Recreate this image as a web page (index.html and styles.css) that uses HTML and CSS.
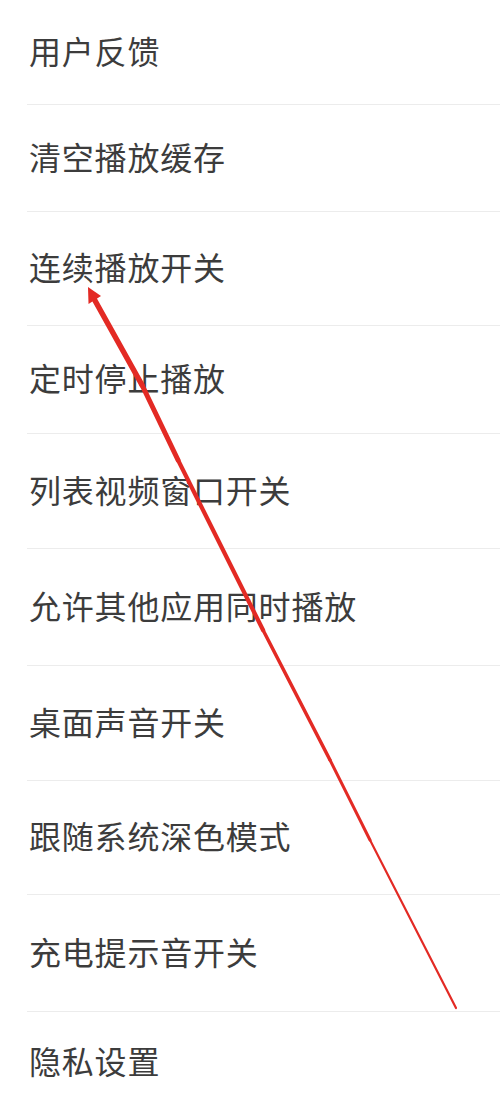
FILE: index.html
```html
<!DOCTYPE html>
<html lang="zh-CN">
<head>
<meta charset="utf-8">
<title>设置</title>
<link rel="stylesheet" href="styles.css">
</head>
<body>
<div class="page">
  <ul class="list">
    <li class="item h105"><span class="label">用户反馈</span></li>
    <li class="item h107"><span class="label">清空播放缓存</span></li>
    <li class="item h114"><span class="label">连续播放开关</span></li>
    <li class="item h108"><span class="label">定时停止播放</span></li>
    <li class="item h115"><span class="label">列表视频窗口开关</span></li>
    <li class="item h117"><span class="label">允许其他应用同时播放</span></li>
    <li class="item h115"><span class="label">桌面声音开关</span></li>
    <li class="item h114"><span class="label">跟随系统深色模式</span></li>
    <li class="item h117"><span class="label">充电提示音开关</span></li>
    <li class="item last h101"><span class="label">隐私设置</span></li>
  </ul>
  <svg class="arrow" width="500" height="1113" viewBox="0 0 500 1113" aria-hidden="true">
    <g fill="none" stroke="#e32a24" stroke-linecap="round">
      <path d="M93 297 L142 385" stroke-width="5.5"/>
      <path d="M142 385 L178 460" stroke-width="5"/>
      <path d="M178 460 L263 630" stroke-width="4.2"/>
      <path d="M263 630 L330 760" stroke-width="3.5"/>
      <path d="M330 760 L370 840" stroke-width="3"/>
      <path d="M370 840 L456 1008" stroke-width="2.2"/>
    </g>
    <polygon points="88,287 101,296 88.5,304" fill="#e32a24"/>
  </svg>
</div>
</body>
</html>
```

FILE: styles.css
```css
html, body {
  margin: 0;
  padding: 0;
  background: #ffffff;
}

.page {
  position: relative;
  width: 500px;
  height: 1113px;
  overflow: hidden;
  background: #ffffff;
}

.list {
  list-style: none;
  margin: 0;
  padding: 0 0 0 27px;
}

.item {
  box-sizing: border-box;
  display: flex;
  align-items: center;
  padding-bottom: 5px;
  border-bottom: 1px solid #ececec;
}

.item.last {
  border-bottom: none;
}

.h101 { height: 101px; }
.h105 { height: 105px; }
.h107 { height: 107px; }
.h108 { height: 108px; }
.h114 { height: 114px; }
.h115 { height: 115px; }
.h117 { height: 117px; }

.label {
  margin-left: 2px;
  font-family: "Noto Sans CJK SC", "Noto Sans", sans-serif;
  font-size: 32px;
  letter-spacing: 0.8px;
  line-height: 1;
  color: #3c3c3c;
  white-space: nowrap;
}

.arrow {
  position: absolute;
  left: 0;
  top: 0;
  pointer-events: none;
}
```
